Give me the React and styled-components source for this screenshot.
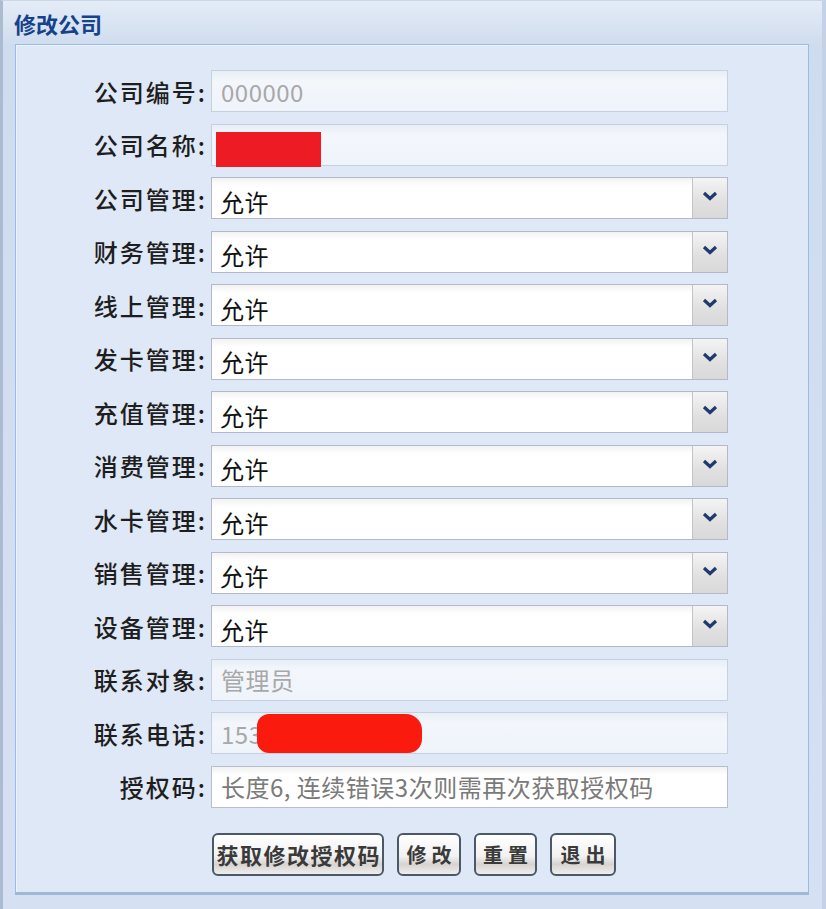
import React from "react";
import styled, { createGlobalStyle } from "styled-components";

const Global = createGlobalStyle`
  html, body { margin: 0; padding: 0; }
  body {
    width: 826px;
    height: 909px;
    overflow: hidden;
    background: #dfe8f6;
    font-family: "Noto Sans CJK SC", "Liberation Sans", sans-serif;
  }
`;

const Window = styled.div`
  box-sizing: border-box;
  width: 826px;
  height: 909px;
  padding: 0 13px 0 12px;
  display: flex;
  flex-direction: column;
  background: linear-gradient(#e4ecf7, #cfdcee 45px, #d5e1f2);
  border-left: 3px solid #aabbd2;
  border-right: 4px solid #c3d2e6;
  border-top: 1px solid #c9d6e8;
`;

const Header = styled.div`
  height: 43px;
  display: flex;
  align-items: center;
  margin-left: -1px;
  font-size: 22px;
  font-weight: 700;
  color: #15428b;
`;

const Body = styled.div`
  box-sizing: border-box;
  height: 851px;
  background: #dfe8f6;
  border: 1px solid #99bbe8;
  border-bottom: 3px solid #9fb6d4;
  box-shadow: inset 1px 1px 0 #eef4fc;
  padding: 25px 0 0 0;
`;

const Form = styled.div`
  display: grid;
  grid-template-columns: 189px 517px;
  grid-auto-rows: 42px;
  row-gap: 11.5px;
  column-gap: 6px;
  align-items: center;
`;

const Label = styled.div`
  text-align: right;
  font-size: 24px;
  font-weight: 500;
  color: #1e1e1e;
  white-space: nowrap;
  letter-spacing: 2px;
  margin-right: -2px;
`;

const TextBox = styled.div`
  position: relative;
  box-sizing: border-box;
  height: 42px;
  display: flex;
  align-items: center;
  padding-left: 9px;
  font-size: 24px;
  letter-spacing: 0.5px;
  color: ${(p) => (p.$tone === "hint" ? "#7a7a7a" : "#a8a8a8")};
  background: ${(p) =>
    p.$tone === "hint"
      ? "linear-gradient(#f1f1f1, #ffffff 8px)"
      : "linear-gradient(#e8eef7, #f3f7fc 10px, #eff4fb)"};
  border: 1px solid ${(p) => (p.$tone === "hint" ? "#b8bfca" : "#c7d0de")};
  white-space: nowrap;
`;

const Select = styled.div`
  box-sizing: border-box;
  height: 42px;
  display: flex;
  background: linear-gradient(#f2f2f2, #ffffff 8px);
  border: 1px solid #b5b8c8;
`;

const SelectValue = styled.div`
  flex: 1;
  display: flex;
  align-items: center;
  padding: 6px 0 0 8px;
  font-size: 24px;
  letter-spacing: 0.5px;
  color: #111;
`;

const Trigger = styled.div`
  width: 35px;
  display: flex;
  justify-content: center;
  padding-top: 13px;
  box-sizing: border-box;
  border-left: 1px solid #c4c4c4;
  background: linear-gradient(#f4f4f4, #e0e0e0 60%, #d9d9d9);
`;

const RedBar = styled.span`
  position: absolute;
  left: ${(p) => p.$left}px;
  top: ${(p) => p.$top}px;
  width: ${(p) => p.$w}px;
  height: ${(p) => p.$h}px;
  background: ${(p) => (p.$round ? "#fb1a0e" : "#ed1c24")};
  border-radius: ${(p) => (p.$round ? "12px 16px 14px 12px" : "0")};
`;

const Buttons = styled.div`
  display: flex;
  gap: 13px;
  margin: 25px 0 0 196px;
`;

const Button = styled.button`
  box-sizing: border-box;
  width: ${(p) => p.$w}px;
  height: 43px;
  padding: 0;
  white-space: nowrap;
  font-family: "Noto Sans CJK SC", "Liberation Sans", sans-serif;
  font-size: ${(p) => (p.$w > 100 ? 22 : 20)}px;
  font-weight: 700;
  color: #3a3a3a;
  letter-spacing: ${(p) => (p.$w > 100 ? "1.5px" : "5px")};
  text-indent: ${(p) => (p.$w > 100 ? "1.5px" : "5px")};
  background: linear-gradient(#ffffff, #f1f1f1 55%, #d7d3d0 75%, #eeeeee);
  border: 2px solid #4a5868;
  border-radius: 6px;
`;

const Chevron = () => (
  <svg width="16" height="10" viewBox="0 0 16 10">
    <path d="M2 2 L8 7.5 L14 2" fill="none" stroke="#1f3a6c" strokeWidth="3.2" />
  </svg>
);

const perms = [
  "公司管理",
  "财务管理",
  "线上管理",
  "发卡管理",
  "充值管理",
  "消费管理",
  "水卡管理",
  "销售管理",
  "设备管理",
];

export default function App() {
  return (
    <>
      <Global />
      <Window>
        <Header>修改公司</Header>
        <Body>
          <Form>
            <Label>公司编号:</Label>
            <TextBox>000000</TextBox>

            <Label>公司名称:</Label>
            <TextBox>
              <RedBar $left={4} $top={7} $w={105} $h={35} />
            </TextBox>

            {perms.map((name) => (
              <React.Fragment key={name}>
                <Label>{name}:</Label>
                <Select>
                  <SelectValue>允许</SelectValue>
                  <Trigger>
                    <Chevron />
                  </Trigger>
                </Select>
              </React.Fragment>
            ))}

            <Label>联系对象:</Label>
            <TextBox>管理员</TextBox>

            <Label>联系电话:</Label>
            <TextBox>
              153
              <RedBar $left={45} $top={1} $w={165} $h={39} $round />
            </TextBox>

            <Label>授权码:</Label>
            <TextBox $tone="hint">长度6, 连续错误3次则需再次获取授权码</TextBox>
          </Form>
          <Buttons>
            <Button $w={172}>获取修改授权码</Button>
            <Button $w={64}>修改</Button>
            <Button $w={63}>重置</Button>
            <Button $w={66}>退出</Button>
          </Buttons>
        </Body>
      </Window>
    </>
  );
}
